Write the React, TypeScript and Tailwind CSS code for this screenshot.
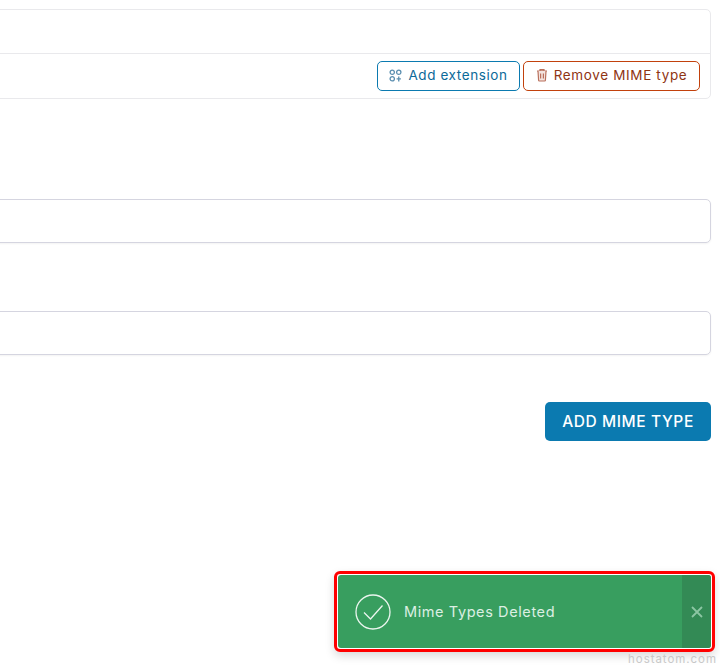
import React from "react";

const font = { fontFamily: '"Inter", "Liberation Sans", sans-serif' };

function ExtIcon() {
  return (
    <svg width="13" height="13" viewBox="0 0 12 12" fill="none" stroke="#5b8fb0" strokeWidth="1.2">
      <circle cx="3" cy="3" r="2" />
      <circle cx="9" cy="3" r="2" />
      <circle cx="3" cy="9" r="2" />
      <path d="M9 7v4.5M7 9.2h4" />
    </svg>
  );
}

function TrashIcon() {
  return (
    <svg width="12" height="14" viewBox="0 0 12 14" fill="#f3e3de" stroke="#b9705c" strokeWidth="1.2">
      <path d="M1 3h10M4 3V1.6h4V3" />
      <path d="M2 3l.6 9.2c0 .5.4.8.9.8h5c.5 0 .9-.3.9-.8L10 3" />
      <path d="M4.600 5.500v5M7.400 5.500v5" />
    </svg>
  );
}

export default function App() {
  return (
    <div className="relative h-[669px] w-[720px] overflow-hidden bg-white" style={font}>
      <div className="ml-[-10px] mr-[9px] pt-[9px]">
        <div className="rounded-[5px] border border-[#e9e9ec]">
          <div className="h-[44px] border-b border-[#e9e9ec]" />
          <div className="flex h-[44px] items-center justify-end gap-[3px] pr-[10px]">
            <button className="flex h-[30px] w-[143px] items-center justify-center gap-[6px] rounded-[5px] border border-[#0b7ab0] pb-[2px] text-[13.5px] tracking-[0.6px] text-[#0b6a99]">
              <ExtIcon />
              Add extension
            </button>
            <button className="flex h-[30px] w-[177px] items-center justify-center gap-[6px] rounded-[5px] border border-[#c2410c] pb-[2px] text-[13.5px] tracking-[0.65px] text-[#8f3413]">
              <TrashIcon />
              Remove MIME type
            </button>
          </div>
        </div>
        <div className="mt-[100px] h-[44px] rounded-[5px] border border-[#d5d5e0] shadow-[0_1px_2px_rgba(0,0,0,0.05)]" />
        <div className="mt-[68px] h-[44px] rounded-[5px] border border-[#d5d5e0] shadow-[0_1px_2px_rgba(0,0,0,0.05)]" />
        <div className="mt-[47px] flex justify-end">
          <button className="h-[39px] w-[166px] rounded-[5px] bg-[#0b7ab0] text-[15.5px] font-medium tracking-[0.6px] text-white">
            ADD MIME TYPE
          </button>
        </div>
      </div>

      <div className="absolute left-[334px] top-[571px] flex h-[81px] w-[381px] rounded-[6px] border-[3px] border-[#ff0000] bg-white p-px shadow-[0_4px_10px_rgba(0,0,0,0.15)]">
        <div className="flex flex-1 overflow-hidden rounded-[3px] bg-[#389e5f]">
          <div className="flex flex-1 items-center gap-[13px] pl-[17px]">
            <svg width="36" height="36" viewBox="0 0 36 36" fill="none" stroke="#eaf5ee" strokeWidth="1.3">
              <circle cx="18" cy="18" r="17" />
              <path d="M9 18.500l6.500 6.500L27.500 11.500" />
            </svg>
            <span className="text-[14.5px] tracking-[0.6px] text-[#dcefe3]">Mime Types Deleted</span>
          </div>
          <div className="flex w-[29px] items-center justify-center bg-[#338a55] pl-px">
            <svg width="12" height="12" viewBox="0 0 12 12" stroke="#8cc6a3" strokeWidth="1.800">
              <path d="M1 1l10 10M11 1L1 11" />
            </svg>
          </div>
        </div>
      </div>

      <span className="absolute bottom-[1px] right-[3px] text-[11.5px] tracking-[0.95px] text-[#c8c8c8]">hostatom.com</span>
    </div>
  );
}
